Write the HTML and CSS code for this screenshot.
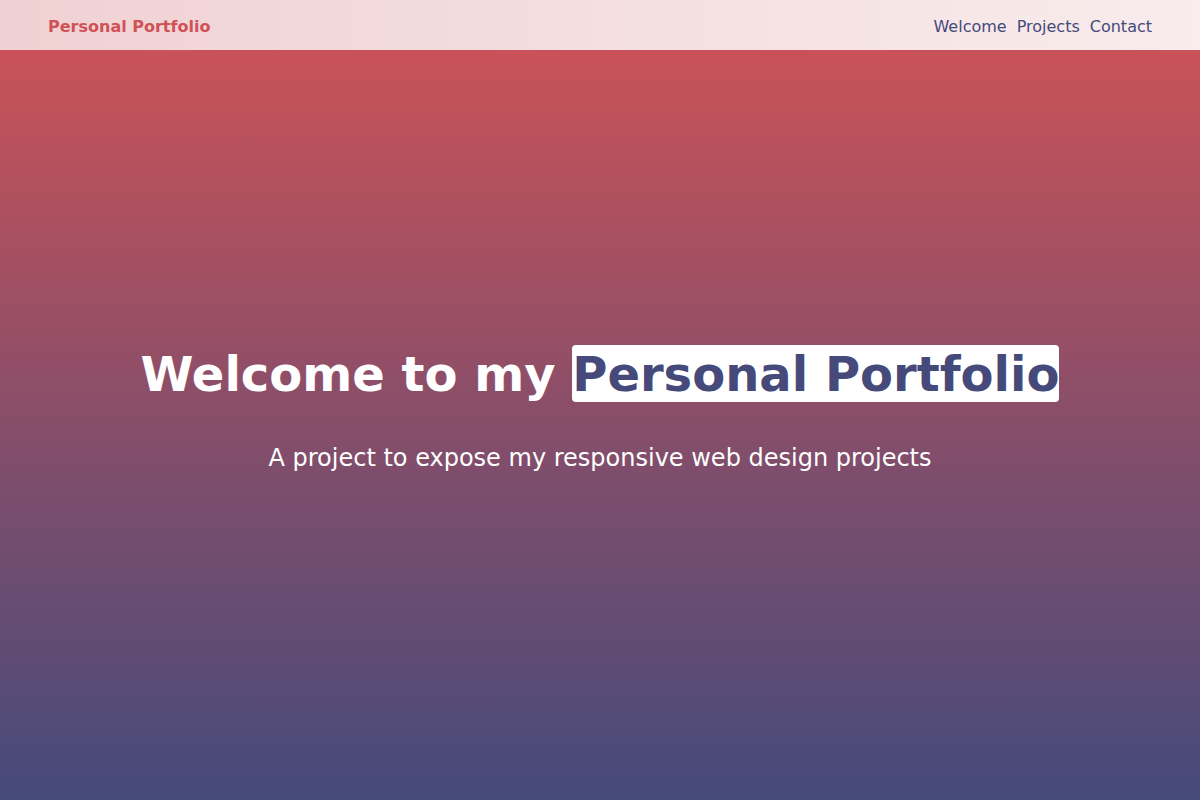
FILE: index.html
```html
<!DOCTYPE html>
<html lang="en">
<head>
<meta charset="utf-8">
<title>Personal Portfolio</title>
<link rel="stylesheet" href="styles.css">
</head>
<body>
<header class="topbar">
  <a class="brand" href="#welcome">Personal Portfolio</a>
  <nav class="nav">
    <a class="nav-link" href="#welcome">Welcome</a>
    <a class="nav-link" href="#projects">Projects</a>
    <a class="nav-link" href="#contact">Contact</a>
  </nav>
</header>
<main class="hero" id="welcome">
  <h1 class="hero-title">Welcome to my <span class="hero-highlight">Personal Portfolio</span></h1>
  <p class="hero-sub">A project to expose my responsive web design projects</p>
</main>
</body>
</html>
```
FILE: styles.css
```css
html, body {
  margin: 0;
  padding: 0;
}
body {
  font-family: "DejaVu Sans", Verdana, sans-serif;
  width: 1200px;
  height: 800px;
  overflow: hidden;
}
.topbar {
  height: 50px;
  box-sizing: border-box;
  padding: 2px 48px 0;
  display: flex;
  align-items: center;
  justify-content: space-between;
  background: linear-gradient(to right, #f0d1d3, #f9ecec);
}
.brand {
  font-size: 16px;
  font-weight: bold;
  color: #d05257;
  text-decoration: none;
}
.nav {
  display: flex;
  gap: 10px;
}
.nav-link {
  font-size: 16px;
  color: #454a7c;
  text-decoration: none;
}
.hero {
  height: 750px;
  box-sizing: border-box;
  padding-bottom: 32px;
  display: flex;
  flex-direction: column;
  align-items: center;
  justify-content: center;
  background: linear-gradient(to bottom, #c95258, #454a7b);
  color: #ffffff;
  text-align: center;
}
.hero-title {
  margin: 0;
  font-size: 48px;
  font-weight: bold;
  line-height: 57px;
}
.hero-highlight {
  background: #ffffff;
  color: #454a7b;
  border-radius: 4px;
  padding-top: 1px;
}
.hero-sub {
  margin: 41px 0 0;
  font-size: 24px;
  line-height: 28px;
}
```
